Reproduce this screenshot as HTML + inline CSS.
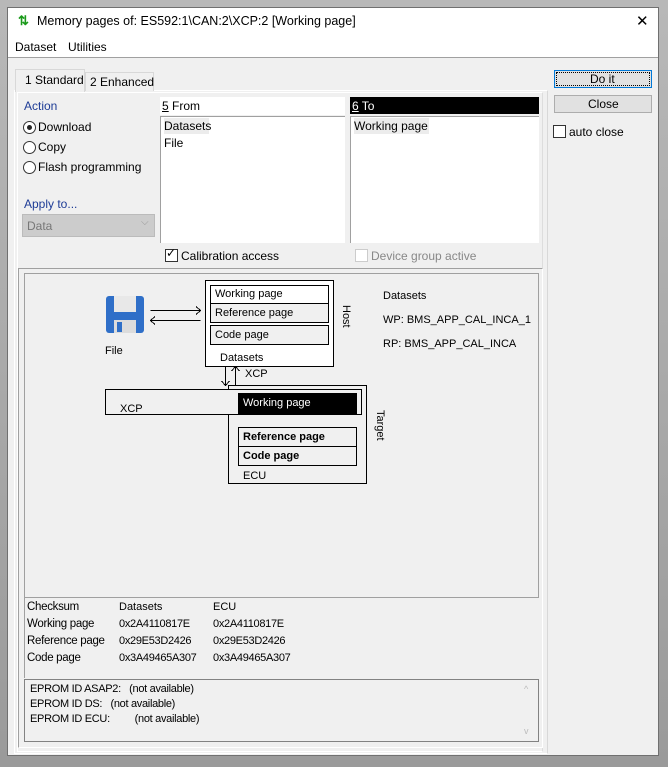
<!DOCTYPE html>
<html><head><meta charset="utf-8"><style>
*{margin:0;padding:0;box-sizing:border-box}
body{width:668px;height:767px;background:#9d9d9d;position:relative;overflow:hidden;font-family:"Liberation Sans",sans-serif;font-size:12px;color:#000}
.a{position:absolute}
.t{position:absolute;white-space:nowrap}
.dg{font-size:11px}
</style></head><body>
<div class="a" style="left:0;top:0;width:668px;height:767px;background:linear-gradient(#b8b8b8,#9a9a9a)"></div>
<div class="a" style="left:7px;top:7px;width:652px;height:749px;background:#f0f0f0;border:1px solid #707070"></div>
<div class="a" style="left:8px;top:8px;width:650px;height:50px;background:#fff;border-bottom:1px solid #a0a0a0"></div>
<div class="t" style="left:18px;top:13px;color:#1a9a1a;font-weight:bold;font-size:13px">⇅</div>
<div class="t" style="left:37px;top:14px;font-size:12.5px">Memory pages of: ES592:1\CAN:2\XCP:2 [Working page]</div>
<div class="t" style="left:636px;top:12px;font-size:15px">✕</div>
<div class="t" style="left:15px;top:40px">Dataset</div>
<div class="t" style="left:68px;top:40px">Utilities</div>

<!-- tabs -->
<div class="a" style="left:14px;top:90px;width:534px;height:664px;border:1px solid #fff;border-right-color:#d8d8d8"></div>
<div class="a" style="left:15px;top:69px;width:70px;height:23px;background:#f0f0f0;border:1px solid #d8d8d8;border-bottom:none"></div>
<div class="t" style="left:25px;top:73px">1 Standard</div>
<div class="a" style="left:85px;top:72px;width:69px;height:19px;background:#f0f0f0;border:1px solid #d8d8d8;border-bottom:none"></div>
<div class="t" style="left:90px;top:75px">2 Enhanced</div>
<div class="a" style="left:17px;top:92px;width:526px;height:660px;background:#f0f0f0;border:1px solid #fff;border-right:1px solid #ddd"></div>

<div class="t" style="left:24px;top:99px;color:#1e3c96">Action</div>
<div class="a" style="left:23px;top:121px;width:13px;height:13px;border:1px solid #333;border-radius:50%;background:#fff"><div class="a" style="left:3px;top:3px;width:5px;height:5px;border-radius:50%;background:#222"></div></div>
<div class="t" style="left:38px;top:120px">Download</div>
<div class="a" style="left:23px;top:141px;width:13px;height:13px;border:1px solid #333;border-radius:50%;background:#fff"></div>
<div class="t" style="left:38px;top:140px">Copy</div>
<div class="a" style="left:23px;top:161px;width:13px;height:13px;border:1px solid #333;border-radius:50%;background:#fff"></div>
<div class="t" style="left:38px;top:160px">Flash programming</div>
<div class="t" style="left:24px;top:197px;color:#1e3c96">Apply to...</div>
<div class="a" style="left:22px;top:214px;width:133px;height:23px;background:#ccc;border:1px solid #bbb"></div>
<div class="t" style="left:27px;top:219px;color:#777">Data</div>
<div class="t" style="left:141px;top:217px;color:#999;font-size:10px">⌵</div>

<div class="a" style="left:160px;top:97px;width:185px;height:18px;background:#fff"></div>
<div class="t" style="left:162px;top:99px"><u>5</u> From</div>
<div class="a" style="left:160px;top:116px;width:185px;height:127px;background:#fff;border:1px solid #a0a0a0;border-right:none;border-bottom:none"></div>
<div class="a" style="left:164px;top:118px;width:45px;height:16px;background:#ececec"></div>
<div class="t" style="left:164px;top:119px">Datasets</div>
<div class="t" style="left:164px;top:136px">File</div>

<div class="a" style="left:350px;top:97px;width:189px;height:17px;background:#000"></div>
<div class="t" style="left:352px;top:99px;color:#fff"><u>6</u> To</div>
<div class="a" style="left:350px;top:116px;width:189px;height:127px;background:#fff;border:1px solid #a0a0a0;border-right:none;border-bottom:none"></div>
<div class="a" style="left:354px;top:118px;width:75px;height:16px;background:#ececec"></div>
<div class="t" style="left:354px;top:119px">Working page</div>

<div class="a" style="left:165px;top:249px;width:13px;height:13px;border:1px solid #333;background:#fff"></div>
<div class="t" style="left:166px;top:246px;font-size:12px">✓</div>
<div class="t" style="left:181px;top:249px">Calibration access</div>
<div class="a" style="left:355px;top:249px;width:13px;height:13px;border:1px solid #ccc;background:#fff"></div>
<div class="t" style="left:371px;top:249px;color:#888">Device group active</div>

<!-- right buttons -->
<div class="a" style="left:554px;top:70px;width:98px;height:18px;background:#e1e1e1;border:1px solid #0078d7"><div class="a" style="left:1px;top:1px;right:1px;bottom:1px;border:1px dotted #000"></div></div>
<div class="t" style="left:590px;top:72px">Do it</div>
<div class="a" style="left:554px;top:95px;width:98px;height:18px;background:#e1e1e1;border:1px solid #adadad"></div>
<div class="t" style="left:588px;top:97px">Close</div>
<div class="a" style="left:553px;top:125px;width:13px;height:13px;border:1px solid #333;background:#fff"></div>
<div class="t" style="left:569px;top:125px">auto close</div>

<!-- diagram frame -->
<div class="a" style="left:18px;top:268px;width:525px;height:480px;border:1px solid #a0a0a0;border-right-color:#fff;border-bottom-color:#fff"></div>
<div class="a" style="left:24px;top:273px;width:515px;height:325px;border:1px solid #a0a0a0;border-bottom-color:#a0a0a0"></div>

<svg class="a" style="left:0;top:0" width="668" height="767">
<g fill="none" stroke="#000" stroke-width="1" shape-rendering="crispEdges">
<rect x="205.5" y="280.5" width="128" height="86" fill="#fff"/>
<rect x="210.5" y="285.5" width="118" height="18" fill="#fff"/>
<rect x="210.5" y="303.5" width="118" height="19" fill="#f0f0f0"/>
<rect x="210.5" y="325.5" width="118" height="19" fill="#f0f0f0"/>
<rect x="228.5" y="385.5" width="138" height="98" fill="#f0f0f0"/>
<rect x="105.5" y="389.5" width="256" height="25" fill="#f0f0f0"/>
<rect x="238.5" y="393.5" width="118" height="20" fill="#000"/>
<rect x="238.5" y="427.5" width="118" height="19" fill="#f0f0f0"/>
<rect x="238.5" y="446.5" width="118" height="19" fill="#f0f0f0"/>
<path d="M150.5 310.5H200.5M196 306.5L200.5 310.5L196 314.5M150.5 320.5H200.5M155 316.5L150.5 320.5L155 324.5"/>
<path d="M225.5 367V385M221.5 381L225.5 385.5L229.5 381M235.5 367V385M231.5 371L235.5 366.5L239.5 371"/>
</g>
<rect x="106" y="296" width="38" height="37" rx="3" fill="#2f6fc8"/>
<rect x="114" y="296" width="22" height="16" fill="#e8e8e8"/>
<rect x="114" y="320" width="22" height="13" fill="#dcdcdc"/>
<rect x="117" y="322" width="5" height="10" fill="#2f6fc8"/>
</svg>
<div class="t dg" style="left:215px;top:288px">Working page</div>
<div class="t dg" style="left:215px;top:307px">Reference page</div>
<div class="t dg" style="left:215px;top:329px">Code page</div>
<div class="t dg" style="left:220px;top:352px">Datasets</div>
<div class="t dg" style="left:341px;top:305px;transform:rotate(90deg);transform-origin:0 0;left:352px">Host</div>
<div class="t dg" style="left:105px;top:345px">File</div>
<div class="t dg" style="left:245px;top:368px">XCP</div>
<div class="t dg" style="left:120px;top:403px">XCP</div>
<div class="t dg" style="left:243px;top:397px;color:#fff">Working page</div>
<div class="t dg" style="left:243px;top:431px;font-weight:bold">Reference page</div>
<div class="t dg" style="left:243px;top:450px;font-weight:bold">Code page</div>
<div class="t dg" style="left:243px;top:470px">ECU</div>
<div class="t dg" style="left:386px;top:410px;transform:rotate(90deg);transform-origin:0 0">Target</div>
<div class="t dg" style="left:383px;top:290px">Datasets</div>
<div class="t dg" style="left:383px;top:314px">WP: BMS_APP_CAL_INCA_1</div>
<div class="t dg" style="left:383px;top:338px">RP: BMS_APP_CAL_INCA</div>

<!-- checksum -->
<div class="a" style="left:24px;top:598px;width:515px;height:80px;border-left:1px solid #a0a0a0"></div>
<div class="t dg" style="left:27px;top:601px;font-size:11.5px;letter-spacing:-0.3px">Checksum</div>
<div class="t dg" style="left:119px;top:601px">Datasets</div>
<div class="t dg" style="left:213px;top:601px">ECU</div>
<div class="t dg" style="left:27px;top:618px;font-size:11.5px;letter-spacing:-0.3px">Working page</div>
<div class="t dg" style="left:119px;top:618px;letter-spacing:-0.3px">0x2A4110817E</div>
<div class="t dg" style="left:213px;top:618px;letter-spacing:-0.3px">0x2A4110817E</div>
<div class="t dg" style="left:27px;top:635px;font-size:11.5px;letter-spacing:-0.3px">Reference page</div>
<div class="t dg" style="left:119px;top:635px;letter-spacing:-0.3px">0x29E53D2426</div>
<div class="t dg" style="left:213px;top:635px;letter-spacing:-0.3px">0x29E53D2426</div>
<div class="t dg" style="left:27px;top:652px;font-size:11.5px;letter-spacing:-0.3px">Code page</div>
<div class="t dg" style="left:119px;top:652px;letter-spacing:-0.3px">0x3A49465A307</div>
<div class="t dg" style="left:213px;top:652px;letter-spacing:-0.3px">0x3A49465A307</div>

<div class="a" style="left:24px;top:679px;width:515px;height:63px;border:1px solid #828282"></div>
<div class="t dg" style="left:30px;top:683px;letter-spacing:-0.3px">EPROM ID ASAP2:&nbsp;&nbsp;&nbsp;(not available)</div>
<div class="t dg" style="left:30px;top:698px;letter-spacing:-0.3px">EPROM ID DS:&nbsp;&nbsp;&nbsp;(not available)</div>
<div class="t dg" style="left:30px;top:713px;letter-spacing:-0.3px">EPROM ID ECU:&nbsp;&nbsp;&nbsp;&nbsp;&nbsp;&nbsp;&nbsp;&nbsp;&nbsp;(not available)</div>
<div class="t" style="left:524px;top:684px;color:#bbb;font-size:9px">^</div>
<div class="t" style="left:524px;top:726px;color:#bbb;font-size:9px">v</div>
</body></html>
